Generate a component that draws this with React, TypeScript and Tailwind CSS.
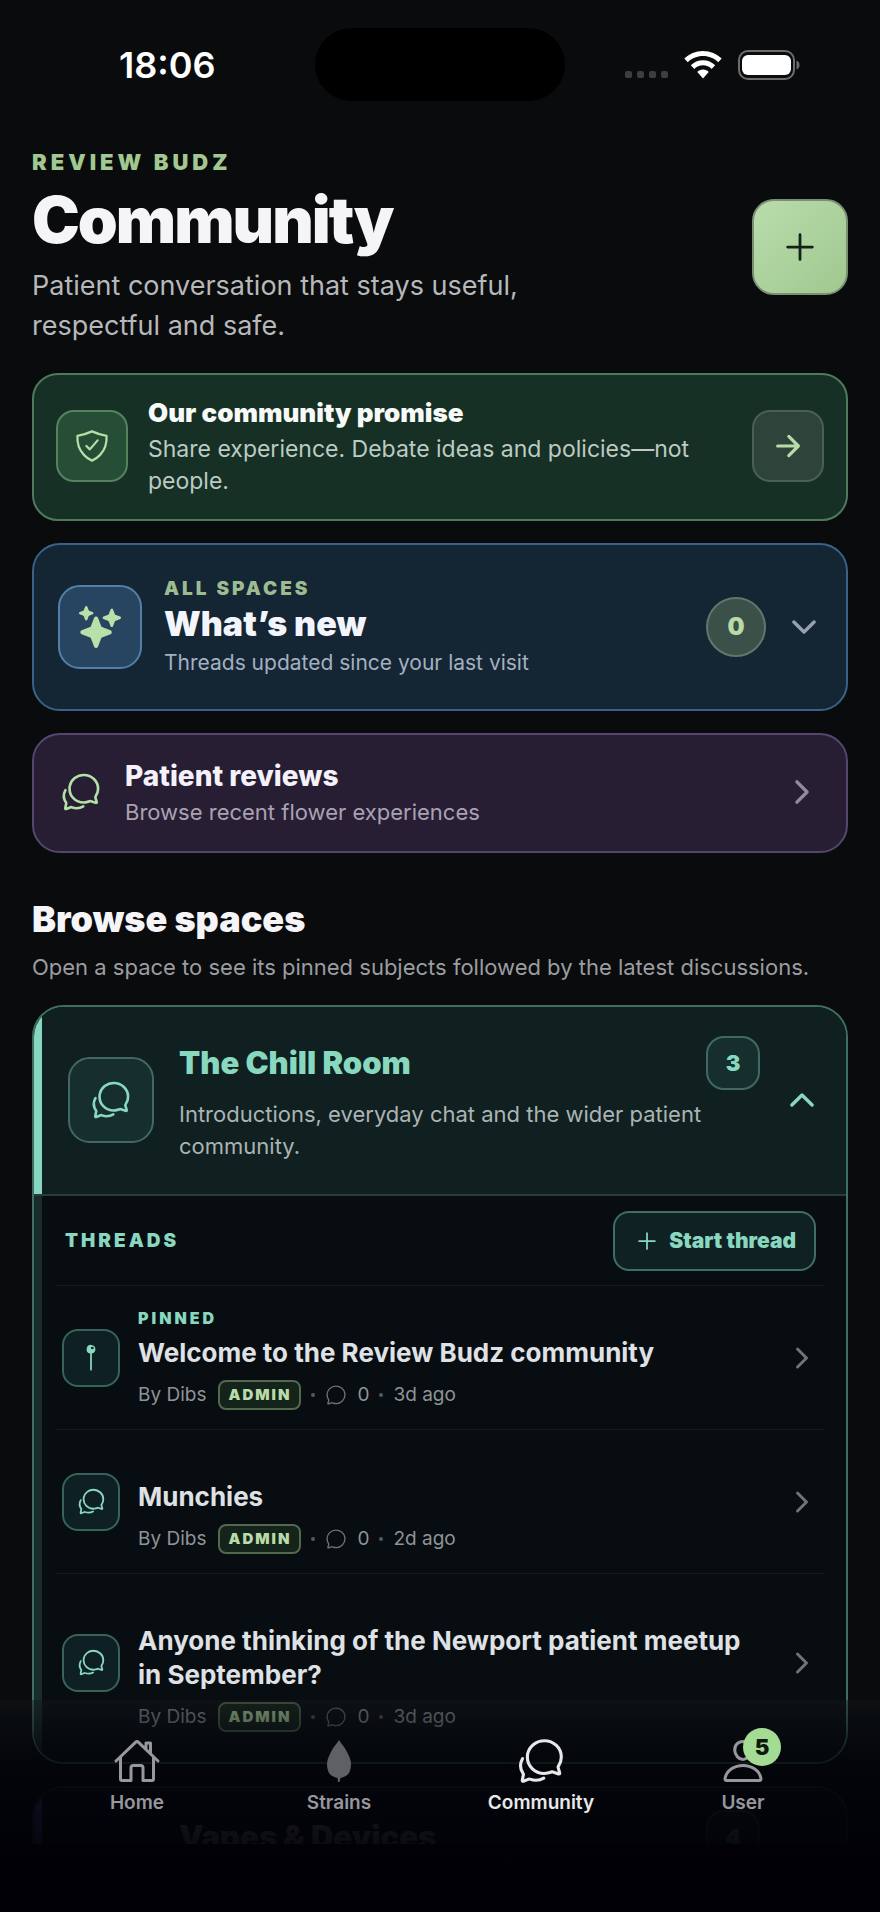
import type { ReactNode } from "react";
import {
	IoAdd,
	IoArrowForward,
	IoChatbubbleOutline,
	IoChatbubblesOutline,
	IoChevronDown,
	IoChevronForward,
	IoChevronUp,
	IoHomeOutline,
	IoPersonOutline,
	IoPin,
	IoShieldCheckmarkOutline,
	IoSparkles,
} from "react-icons/io5";

type Thread = {
	id: string;
	title: string;
	author: string;
	replies: number;
	age: string;
	pinned?: boolean;
};

const threads: Thread[] = [
	{
		id: "welcome",
		title: "Welcome to the Review Budz community",
		author: "Dibs",
		replies: 0,
		age: "3d ago",
		pinned: true,
	},
	{
		id: "munchies",
		title: "Munchies",
		author: "Dibs",
		replies: 0,
		age: "2d ago",
	},
	{
		id: "newport",
		title: "Anyone thinking of the Newport patient meetup in September?",
		author: "Dibs",
		replies: 0,
		age: "3d ago",
	},
];

function StatusBar() {
	return (
		<div className="grid shrink-0 grid-cols-[1fr_250px_1fr] items-center pt-7">
			<span className="pl-[119px] text-[36px] leading-10 font-semibold text-white">
				18:06
			</span>
			<span className="h-[73px] rounded-full bg-black" />
			<div className="flex items-center justify-end gap-4 pr-20">
				<span className="flex gap-[5px] pt-5">
					<i className="size-[7px] rounded-[2px] bg-[#3d3e40]" />
					<i className="size-[7px] rounded-[2px] bg-[#3d3e40]" />
					<i className="size-[7px] rounded-[2px] bg-[#3d3e40]" />
					<i className="size-[7px] rounded-[2px] bg-[#3d3e40]" />
				</span>
				<svg width="38" height="28" viewBox="0 0 38 28" fill="white">
					<path d="M19 0C26.300 0 33 2.900 37.700 7.600L34.200 11.200C30.300 7.300 25 5 19 5S7.700 7.300 3.800 11.200L.3 7.600C5 2.900 11.700 0 19 0Z" />
					<path d="M19 9.300C23.700 9.300 28 11.200 31.200 14.300L27.600 17.900C25.400 15.700 22.300 14.300 19 14.300S12.600 15.700 10.400 17.900L6.800 14.300C10 11.200 14.300 9.300 19 9.300Z" />
					<path d="M19 18.600C21.200 18.600 23.200 19.500 24.700 20.900L19 27.500L13.300 20.900C14.800 19.500 16.800 18.600 19 18.600Z" />
				</svg>
				<svg width="62" height="30" viewBox="0 0 62 30">
					<rect x="1" y="1" width="55" height="28" rx="9" fill="none" stroke="#6c6d6f" strokeWidth="2" />
					<rect x="4" y="5" width="49" height="20" rx="6" fill="white" />
					<path d="M58.500 10.500C60.500 11.300 61.500 13 61.500 15S60.500 18.700 58.500 19.500Z" fill="#6c6d6f" />
				</svg>
			</div>
		</div>
	);
}

function PageHeader() {
	return (
		<header className="flex items-center justify-between gap-6">
			<div>
				<p className="text-[22px] leading-7 font-black tracking-[4px] text-[#a0c890]">
					REVIEW BUDZ
				</p>
				<h1 className="pt-1.5 pb-2 text-[64px] leading-[76px] font-black tracking-[-2px] text-[#f5f5f8]">
					Community
				</h1>
				<p className="max-w-[560px] text-[27px] leading-10 text-[#b7b8ba]">
					Patient conversation that stays useful, respectful and safe.
				</p>
			</div>
			<button
				type="button"
				aria-label="New post"
				className="flex size-24 shrink-0 items-center justify-center rounded-[22px] border-2 border-[#7b8f74] bg-linear-to-br from-[#b9dcab] to-[#a0c890] text-[#14201a]"
			>
				<IoAdd size={44} />
			</button>
		</header>
	);
}

function PromiseCard() {
	return (
		<button
			type="button"
			className="flex w-full items-center gap-5 rounded-[26px] border-2 border-[#4d7a5d] bg-[#163025] px-[22px] pt-5 pb-[22px] text-left"
		>
			<span className="flex size-[72px] shrink-0 items-center justify-center rounded-[18px] border-2 border-[#568260] bg-[#264d36] text-[#b4dfa6]">
				<IoShieldCheckmarkOutline size={36} />
			</span>
			<span className="flex-1">
				<span className="block pb-0.5 text-[26px] leading-9 font-black text-[#f7faf8]">
					Our community promise
				</span>
				<span className="block text-[23px] leading-8 text-[#bccbc3]">
					Share experience. Debate ideas and policies—not people.
				</span>
			</span>
			<span className="ml-5 flex size-[72px] shrink-0 items-center justify-center rounded-[18px] border-2 border-[#48605a] bg-[#2e443a] text-[#b9dca6]">
				<IoArrowForward size={34} />
			</span>
		</button>
	);
}

function WhatsNewCard() {
	return (
		<button
			type="button"
			aria-expanded={false}
			className="flex w-full items-center rounded-[28px] border-2 border-[#3b6189] bg-[#142533] px-6 py-[30px] text-left"
		>
			<span className="flex size-[84px] shrink-0 items-center justify-center rounded-[22px] border-2 border-[#5380a8] bg-[#274560] text-[#b9e0a9]">
				<IoSparkles size={42} />
			</span>
			<span className="flex-1 pt-0.5 pl-[22px]">
				<span className="block text-[19px] leading-6 font-black tracking-[3px] text-[#9dba91]">
					ALL SPACES
				</span>
				<span className="block text-[34px] leading-[46px] font-black text-[#f2f5fb]">
					What’s new
				</span>
				<span className="block text-[21px] leading-8 text-[#a4b0c0]">
					Threads updated since your last visit
				</span>
			</span>
			<span className="flex size-[60px] shrink-0 items-center justify-center rounded-full border-2 border-[#5d786c] bg-[#3b5049] text-2xl font-black text-[#b9dca6]">
				0
			</span>
			<IoChevronDown size={36} className="ml-5 text-[#97a1b0]" />
		</button>
	);
}

function ReviewsCard() {
	return (
		<a
			href="#reviews"
			className="flex items-center rounded-[28px] border-2 border-[#54466f] bg-[#271e33] pt-[21px] pr-[26px] pb-[23px] pl-[26px]"
		>
			<IoChatbubblesOutline size={42} className="shrink-0 text-[#b4dfa6]" />
			<span className="flex-1 pl-[23px]">
				<span className="block text-[28px] leading-10 font-extrabold text-[#f4f1fb]">
					Patient reviews
				</span>
				<span className="block text-[22px] leading-8 text-[#a9a2b4]">
					Browse recent flower experiences
				</span>
			</span>
			<IoChevronForward size={36} className="text-[#938b9f]" />
		</a>
	);
}

function ThreadRow({ thread }: { thread: Thread }) {
	return (
		<li className="border-t border-[#151c20]">
			<a href={`#${thread.id}`} className="flex items-center py-[18px] pr-1.5 pl-1.5">
				<span className="flex size-[58px] shrink-0 items-center justify-center rounded-2xl border-2 border-[#37635a] bg-[#0f2024] text-[#88d8c0]">
					{thread.pinned ? <IoPin size={28} /> : <IoChatbubblesOutline size={29} />}
				</span>
				<span className="flex-1 pl-[18px]">
					<span className="block h-8 text-base leading-7 font-black tracking-[3px] text-[#88d8c0]">
						{thread.pinned && "PINNED"}
					</span>
					<span className="block max-w-[624px] text-[26px] leading-[34px] font-bold text-[#dfe1e4]">
						{thread.title}
					</span>
					<span className="flex items-center pt-[9px] text-[19px] leading-8 text-[#8f9497]">
						By {thread.author}
						<span className="ml-3 rounded-lg border-2 border-[#53684f] bg-[#14241a] px-2 text-[15px] leading-[26px] font-black tracking-[2px] text-[#b9dca6]">
							ADMIN
						</span>
						<i className="mx-[10px] size-1 rounded-full bg-[#55595c]" />
						<IoChatbubbleOutline size={22} className="text-[#6d7275]" />
						<span className="pl-2.5">{thread.replies}</span>
						<i className="mx-[10px] size-1 rounded-full bg-[#55595c]" />
						{thread.age}
					</span>
				</span>
				<IoChevronForward size={32} className="text-[#6f7478]" />
			</a>
		</li>
	);
}

function ChillRoom() {
	return (
		<section className="overflow-hidden rounded-[32px] border-2 border-[#3f6e62]">
			<div className="border-b-2 border-[#2b3a3a]">
				<button
					type="button"
					aria-expanded
					className="flex w-full items-center border-l-8 border-[#88d8c0] bg-[#101f1f] pt-[25px] pr-[26px] pb-[26px] pl-[26px] text-left"
				>
					<span className="flex size-[86px] shrink-0 items-center justify-center rounded-[22px] border-2 border-[#42695f] bg-[#172e2e] text-[#88d8c0]">
						<IoChatbubblesOutline size={42} />
					</span>
					<span className="flex-1 pl-[25px]">
						<span className="flex items-center justify-between pt-0.5">
							<span className="text-[31px] leading-[58px] font-black text-[#88d8c0]">
								The Chill Room
							</span>
							<span className="flex size-[54px] items-center justify-center rounded-[18px] border-2 border-[#42695f] bg-[#172e2e] text-[22px] font-black text-[#88d8c0]">
								3
							</span>
						</span>
						<span className="block pt-1.5 pb-1.5 text-[22px] leading-8 text-[#aab4b4]">
							Introductions, everyday chat and the wider patient community.
						</span>
					</span>
					<IoChevronUp size={36} className="ml-6 text-[#88d8c0]" />
				</button>
			</div>
			<div className="border-l-8 border-[#182c2c] bg-[#080d11] pr-[22px] pb-[11px] pl-[14px]">
				<div className="flex items-center justify-between pt-[15px] pr-2 pb-[14px] pl-[9px]">
					<h3 className="text-[19px] font-black tracking-[3px] text-[#88d8c0]">
						THREADS
					</h3>
					<button
						type="button"
						className="flex h-[60px] items-center gap-2 rounded-2xl border-2 border-[#3f6e62] bg-[#102124] px-[18px] text-[21px] font-black text-[#88d8c0]"
					>
						<IoAdd size={28} />
						Start thread
					</button>
				</div>
				<ul>
					{threads.map((thread) => (
						<ThreadRow key={thread.id} thread={thread} />
					))}
				</ul>
			</div>
		</section>
	);
}

function VapesSpace() {
	return (
		<section className="overflow-hidden rounded-[32px] border-2 border-[#34384c]">
			<button
				type="button"
				aria-expanded={false}
				className="flex w-full items-center border-l-8 border-[#4a6cc0] bg-[#10131f] py-[18px] pr-[86px] pl-[137px] text-left"
			>
				<span className="flex flex-1 items-center justify-between pt-0.5">
					<span className="text-[31px] leading-[58px] font-black text-[#c9c9d2]">
						Vapes & Devices
					</span>
					<span className="flex size-[54px] items-center justify-center rounded-[18px] border-2 border-[#42695f] bg-[#172e2e] text-[22px] font-black text-[#88d8c0]">
						4
					</span>
				</span>
			</button>
		</section>
	);
}

function NavItem({
	label,
	icon,
	active,
	badge,
}: {
	label: string;
	icon: ReactNode;
	active?: boolean;
	badge?: number;
}) {
	return (
		<a
			href={`#${label.toLowerCase()}`}
			aria-current={active ? "page" : undefined}
			className={`flex flex-1 flex-col items-center ${active ? "text-[#e8e8ea]" : "text-[#97979d]"}`}
		>
			<span className="relative flex h-[50px] items-center">
				{icon}
				{badge && (
					<span className="absolute -top-2 left-6 flex size-[38px] items-center justify-center rounded-full bg-[#a3dc92] text-[22px] font-black text-[#10180f]">
						{badge}
					</span>
				)}
			</span>
			<span className="pt-[3px] text-[19px] leading-7 font-semibold">{label}</span>
		</a>
	);
}

function LeafIcon() {
	return (
		<svg width="26" height="42" viewBox="0 0 26 42" fill="#5f6065">
			<path d="M13 0C15 4 19 7 20.500 11C22.500 15 25 19 25 24C25 27 24.500 30 23 33C21 36 18 37 14.500 38L13.500 42H12L11.500 38C8 37 5 36 3 33C1.500 30 1 27 1 24C1 19 3.500 15 5.500 11C7 7 11 4 13 0Z" />
		</svg>
	);
}

export default function App() {
	return (
		<div className="relative flex h-screen flex-col overflow-hidden bg-[#090b0d] font-['Inter',sans-serif]">
			<main className="min-h-0 flex-1 overflow-hidden">
				<StatusBar />
				<div className="flex flex-col gap-[22px] px-8 pt-[47px]">
					<PageHeader />
					<div className="flex flex-col gap-[22px] pt-[5px]">
						<PromiseCard />
						<WhatsNewCard />
						<ReviewsCard />
					</div>
					<div className="pt-5">
						<h2 className="text-[36px] leading-[48px] font-black text-[#f5f5f8]">
							Browse spaces
						</h2>
						<p className="pt-2 text-[22px] leading-8 text-[#9c9da0]">
							Open a space to see its pinned subjects followed by the latest discussions.
						</p>
					</div>
					<ChillRoom />
					<VapesSpace />
				</div>
			</main>
			<div className="h-[68px] shrink-0 bg-[#010105]" />
			<nav className="absolute inset-x-0 bottom-0 flex h-[212px] bg-linear-to-b from-[#15181a]/40 via-[#020408]/85 via-32% to-[#010105] to-85% px-9 pt-9">
				<NavItem label="Home" icon={<IoHomeOutline size={48} />} />
				<NavItem label="Strains" icon={<LeafIcon />} />
				<NavItem label="Community" icon={<IoChatbubblesOutline size={50} />} active />
				<NavItem label="User" icon={<IoPersonOutline size={48} />} badge={5} />
			</nav>
		</div>
	);
}
